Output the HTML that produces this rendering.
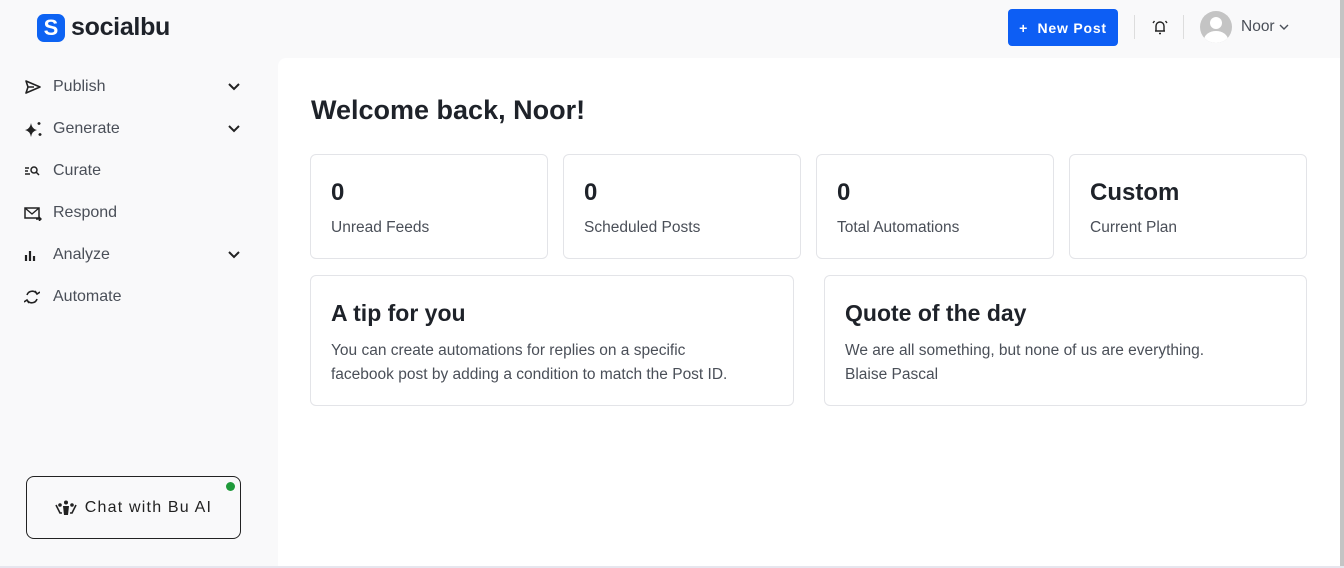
<!DOCTYPE html>
<html><head><meta charset="utf-8"><style>
*{box-sizing:border-box;margin:0;padding:0}
body{width:1344px;height:568px;overflow:hidden;background:#f9f9fa;font-family:"Liberation Sans",sans-serif;color:#1e2229;position:relative}
.logo{position:absolute;left:37px;top:13px;display:flex;align-items:center}
.logo .ic{width:28px;height:28px;border-radius:7px;background:#0d63f3;display:flex;align-items:center;justify-content:center;color:#fff;font-weight:bold;font-size:22px}
.logo span{font-size:25px;font-weight:bold;margin-left:6px;color:#1e2229;letter-spacing:-0.3px}
.nav{position:absolute;left:24px;top:66px;width:220px}
.nav div{height:42px;display:flex;align-items:center;font-size:16px;color:#4a4f58;position:relative}
.nav .i{width:29px;display:inline-flex;align-items:center}
.nav .chev{position:absolute;right:4px;top:17px}
.chat{position:absolute;left:26px;top:476px;width:215px;height:63px;border:1px solid #222;border-radius:8px;display:flex;align-items:center;justify-content:center;font-size:16px;letter-spacing:1.2px;color:#222}
.chat .dot{position:absolute;right:5px;top:5px;width:9px;height:9px;border-radius:50%;background:#1f9a3a}
.main{position:absolute;left:278px;top:58px;width:1062px;height:508px;background:#fff;border-radius:8px 0 0 0}
.sb{position:absolute;right:0;top:0;width:4px;height:568px;background:#c4c4c4}
.bottom{position:absolute;left:0;top:566px;width:1344px;height:2px;background:#e6e6ee}
h1{position:absolute;left:311px;top:95px;font-size:27px;font-weight:bold;color:#1e2229}
.card{position:absolute;border:1px solid #e3e4e8;border-radius:6px;background:#fff}
.card .n{position:absolute;left:20px;top:24px;font-size:24px;font-weight:bold}
.card .l{position:absolute;left:20px;top:64px;font-size:15.5px;color:#4a4f58}
.card h2{position:absolute;left:20px;top:24px;font-size:23px;font-weight:bold}
.card p{position:absolute;left:20px;top:63px;font-size:15.5px;line-height:24px;color:#4a4f58}
.btn{position:absolute;left:1008px;top:9px;width:110px;height:37px;background:#0d5ef4;border-radius:4px;color:#fff;font-weight:bold;font-size:14px;letter-spacing:0.8px;display:flex;align-items:center;justify-content:center}
.sep{position:absolute;top:15px;width:1px;height:24px;background:#ddd}
.av{position:absolute;left:1200px;top:11px;width:32px;height:32px;border-radius:50%;background:#c4c4c4;overflow:hidden}
</style></head><body>
<div class="logo"><div class="ic">S</div><span>socialbu</span></div>
<div class="nav">
<div><span class="i"><svg width="18" height="16" viewBox="0 0 18 16"><path d="M2 2 L16 8 L2 14 L4 8 Z M4 8 H10" fill="none" stroke="#222" stroke-width="1.6" stroke-linejoin="round"/></svg></span>Publish<svg class="chev" width="12" height="8" viewBox="0 0 12 8"><path d="M1 1l5 5 5-5" fill="none" stroke="#222" stroke-width="2"/></svg></div>
<div><span class="i"><svg width="20" height="18" viewBox="0 0 20 18"><path d="M7 3 Q8 9 13 10 Q8 11 7 17 Q6 11 1 10 Q6 9 7 3Z" fill="#222"/><path d="M15 2v3M13.5 3.5h3M16 13v3M14.5 14.5h3" stroke="#222" stroke-width="1.4"/></svg></span>Generate<svg class="chev" width="12" height="8" viewBox="0 0 12 8"><path d="M1 1l5 5 5-5" fill="none" stroke="#222" stroke-width="2"/></svg></div>
<div><span class="i"><svg width="16" height="12" viewBox="0 0 16 12"><path d="M1 3h4M1 6h3M1 9h5" stroke="#222" stroke-width="1.4"/><circle cx="10" cy="5" r="3" fill="none" stroke="#222" stroke-width="1.5"/><path d="M12 7l3 3" stroke="#222" stroke-width="1.5"/></svg></span>Curate</div>
<div><span class="i"><svg width="18" height="16" viewBox="0 0 18 16"><rect x="1" y="3" width="14" height="10" fill="none" stroke="#222" stroke-width="1.5"/><path d="M1 3l7 6 7-6M12 14h5M15 12l2 2-2 2" fill="none" stroke="#222" stroke-width="1.4"/></svg></span>Respond</div>
<div><span class="i"><svg width="14" height="12" viewBox="0 0 14 12"><path d="M2 6v6M6 2v10M10 7v5" stroke="#222" stroke-width="2.2"/></svg></span>Analyze<svg class="chev" width="12" height="8" viewBox="0 0 12 8"><path d="M1 1l5 5 5-5" fill="none" stroke="#222" stroke-width="2"/></svg></div>
<div><span class="i"><svg width="16" height="18" viewBox="0 0 16 18"><path d="M13 6A5.5 5.5 0 0 0 3 7M3 12a5.5 5.5 0 0 0 10-1M11 3l2 3 3-2M5 15l-2-3-3 2" fill="none" stroke="#222" stroke-width="1.6"/></svg></span>Automate</div>
</div>
<div class="chat"><span class="dot"></span><svg width="22" height="16" viewBox="0 0 22 16" style="margin-right:8px"><circle cx="11" cy="2.5" r="2" fill="#222"/><circle cx="5" cy="5" r="1.8" fill="#222"/><circle cx="17" cy="5" r="1.8" fill="#222"/><path d="M8 6h6l-1 9h-4z" fill="#222"/><path d="M1 5l4 8h2M21 5l-4 8h-2" fill="none" stroke="#222" stroke-width="1.6"/></svg>Chat with Bu AI</div>
<div class="btn">+&nbsp; New Post</div>
<div class="sep" style="left:1134px"></div>
<svg style="position:absolute;left:1151px;top:18px" width="18" height="18" viewBox="0 0 18 18"><path d="M5 13V8a4 4 0 0 1 8 0v5H4h10M8 15.5h2M2 5l1.5-2M16 5l-1.5-2" fill="none" stroke="#222" stroke-width="1.4"/></svg>
<div class="sep" style="left:1183px"></div>
<div class="av"><div style="position:absolute;left:10px;top:6px;width:12px;height:12px;border-radius:50%;background:#fff"></div><div style="position:absolute;left:4px;top:20px;width:24px;height:18px;border-radius:50%;background:#fff"></div></div>
<div style="position:absolute;left:1241px;top:18px;font-size:15.5px;color:#4a4f58">Noor <svg width="10" height="7" viewBox="0 0 10 7"><path d="M1 1l4 4 4-4" fill="none" stroke="#4a4f58" stroke-width="1.4"/></svg></div>
<div class="main"></div>
<div class="sb"></div>
<div class="bottom"></div>
<h1>Welcome back, Noor!</h1>
<div class="card" style="left:310px;top:154px;width:238px;height:105px"><div class="n">0</div><div class="l">Unread Feeds</div></div>
<div class="card" style="left:563px;top:154px;width:238px;height:105px"><div class="n">0</div><div class="l">Scheduled Posts</div></div>
<div class="card" style="left:816px;top:154px;width:238px;height:105px"><div class="n">0</div><div class="l">Total Automations</div></div>
<div class="card" style="left:1069px;top:154px;width:238px;height:105px"><div class="n">Custom</div><div class="l">Current Plan</div></div>
<div class="card" style="left:310px;top:275px;width:484px;height:131px"><h2>A tip for you</h2><p>You can create automations for replies on a specific<br>facebook post by adding a condition to match the Post ID.</p></div>
<div class="card" style="left:824px;top:275px;width:483px;height:131px"><h2>Quote of the day</h2><p>We are all something, but none of us are everything.<br>Blaise Pascal</p></div>
</body></html>
